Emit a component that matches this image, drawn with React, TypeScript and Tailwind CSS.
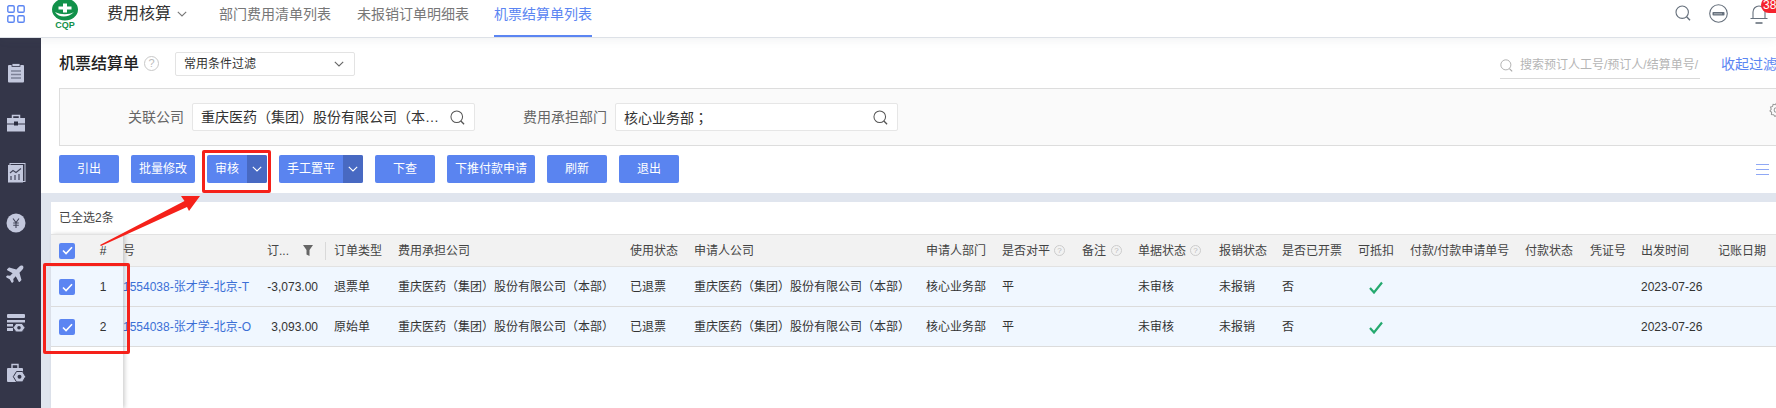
import React from "react";
import { FaPlane } from "react-icons/fa";

const GRID = "grid grid-cols-[136px_67px_64px_232px_64px_232px_76px_80px_56px_81px_63px_76px_52px_115px_65px_51px_77px_66px]";

function Chevron({ className = "", color = "#666" }: { className?: string; color?: string }) {
  return (
    <svg viewBox="0 0 10 6" className={className} fill="none" stroke={color} strokeWidth="1.1">
      <path d="M0.8 0.8 5 5 9.2 0.8" />
    </svg>
  );
}

function SearchIcon({ className = "", color = "#555" }: { className?: string; color?: string }) {
  return (
    <svg viewBox="0 0 16 16" className={className} fill="none" stroke={color} strokeWidth="1.1">
      <circle cx="7.2" cy="7.2" r="6.2" />
      <path d="M11.6 11.8 15 15.2" strokeWidth="1.4" />
    </svg>
  );
}

function Help({ big = false }: { big?: boolean }) {
  return (
    <span
      className={
        big
          ? "inline-flex h-[15px] w-[15px] shrink-0 items-center justify-center rounded-full border border-[#c8c8c8] text-[11px] leading-none text-[#bbbbbb]"
          : "inline-flex h-[11px] w-[11px] shrink-0 items-center justify-center rounded-full border border-[#cccccc] text-[8px] leading-none text-[#bbbbbb]"
      }
    >
      ?
    </span>
  );
}

function Box() {
  return (
    <span className="flex h-4 w-4 items-center justify-center rounded-[2px] bg-[#5b85f2]">
      <svg viewBox="0 0 12 10" className="h-[9px] w-[11px]" fill="none" stroke="#ffffff" strokeWidth="1.8">
        <path d="M1 5 4.4 8.4 11 1.4" />
      </svg>
    </span>
  );
}

function Btn({ children, w }: { children: React.ReactNode; w: string }) {
  return (
    <div className={`flex h-7 items-center justify-center rounded-[2px] bg-[#5a84f0] text-xs text-white ${w}`}>{children}</div>
  );
}

function SplitBtn({ children, w }: { children: React.ReactNode; w: string }) {
  return (
    <div className={`flex h-7 overflow-hidden rounded-[2px] bg-[#5a84f0] text-xs text-white ${w}`}>
      <div className="flex flex-1 items-center justify-center">{children}</div>
      <div className="flex w-5 items-center justify-center bg-[#4869c2]">
        <Chevron className="h-[6px] w-[10px]" color="#ffffff" />
      </div>
    </div>
  );
}

const ICON = "#c3c8dd";
const DARK = "#343649";

const sideIcons = [
  <svg key="a" viewBox="0 0 20 20" className="h-5 w-5">
    <rect x="2" y="2" width="16" height="17.5" rx="1" fill={ICON} />
    <rect x="6" y="0.5" width="8" height="3" fill={ICON} stroke={DARK} strokeWidth="0.8" />
    <path d="M5 8h10M5 11.5h10M5 15h10" stroke="#7c8197" strokeWidth="1.3" />
  </svg>,
  <svg key="b" viewBox="0 0 20 20" className="h-5 w-5">
    <path d="M6.5 5V2.5h7V5" fill="none" stroke={ICON} strokeWidth="1.5" />
    <rect x="1" y="5" width="18" height="5.5" fill={ICON} />
    <rect x="1" y="11.5" width="18" height="7" fill={ICON} />
    <rect x="8" y="8.5" width="4" height="4" fill="#2b2d40" />
  </svg>,
  <svg key="c" viewBox="0 0 20 20" className="h-5 w-5">
    <rect x="4" y="0.5" width="15" height="18" fill="none" stroke={ICON} strokeWidth="1" />
    <rect x="2" y="2" width="15" height="17.5" fill={ICON} />
    <path d="M4 10 7 7.5 10 9.5 15 5.5" fill="none" stroke="#44475b" strokeWidth="1.1" />
    <path d="M5 17v-4M9 17v-5M13 17v-6" stroke="#44475b" strokeWidth="1.2" />
  </svg>,
  <svg key="d" viewBox="0 0 20 20" className="h-5 w-5">
    <circle cx="10" cy="10" r="9.5" fill={ICON} />
    <path d="M7 5.5 10 9.5 13 5.5M10 9.5V15M7.2 10h5.6M7.2 12.3h5.6" fill="none" stroke="#44475b" strokeWidth="1.1" />
  </svg>,
  <FaPlane key="e" className="h-5 w-5 -rotate-45" color={ICON} />,
  <svg key="f" viewBox="0 0 20 20" className="h-5 w-5">
    <rect x="1" y="1" width="18" height="4" rx="1" fill={ICON} />
    <rect x="1" y="7" width="18" height="2.5" fill={ICON} />
    <rect x="1" y="11" width="6" height="2.5" fill={ICON} />
    <rect x="1" y="15" width="6" height="3" fill={ICON} />
    <path d="M10 10.5h6l3 4.2-3 4.2h-6l-3-4.2z" fill={ICON} stroke={DARK} strokeWidth="0.8" />
    <circle cx="13" cy="14.7" r="1.8" fill={DARK} />
  </svg>,
  <svg key="g" viewBox="0 0 20 20" className="h-5 w-5">
    <path d="M6 5V1.5h6V5" fill="none" stroke={ICON} strokeWidth="1.4" />
    <rect x="1" y="5" width="16" height="14" rx="1" fill={ICON} />
    <path d="M10.5 8.5h6l3.2 5.2-3.2 5.2h-6l-3.2-5.2z" fill={ICON} stroke={DARK} strokeWidth="1" />
    <circle cx="13.5" cy="13.7" r="2" fill={DARK} />
  </svg>,
];

const rows = [
  { code: "1554038-张才学-北京-T", amount: "-3,073.00", type: "退票单" },
  { code: "1554038-张才学-北京-O", amount: "3,093.00", type: "原始单" },
];

const COMPANY = "重庆医药（集团）股份有限公司（本部）";

export default function App() {
  return (
    <div className="relative flex h-[408px] w-[1776px] flex-col overflow-hidden bg-[#e0e5ee] font-['Liberation_Sans','Noto_Sans_CJK_SC',sans-serif] text-xs text-[#333333]">
      {/* top bar */}
      <header className="relative z-20 flex h-[38px] shrink-0 items-start border-b border-[#dde1e7] bg-white shadow-[0_3px_8px_rgba(90,100,120,0.07)]">
        <svg viewBox="0 0 18 18" className="ml-[7px] mt-[5px] h-[18px] w-[18px]" fill="none" stroke="#5b85f2" strokeWidth="1.4">
          <rect x="0.8" y="0.8" width="6.4" height="6.4" rx="1.2" />
          <rect x="10.8" y="0.8" width="6.4" height="6.4" rx="1.2" />
          <rect x="0.8" y="10.8" width="6.4" height="6.4" rx="1.2" />
          <rect x="10.8" y="10.8" width="6.4" height="6.4" rx="1.2" />
        </svg>
        <div className="ml-[27px] flex w-[26px] flex-col items-center">
          <svg viewBox="0 0 26 21" className="h-[21px] w-[26px]">
            <ellipse cx="13" cy="9.5" rx="13" ry="11" fill="#11914a" />
            <path d="M3 12c4 6 13 6 19 0-5 3-13 3-19 0z" fill="#ffffff" />
            <path d="M11 3.5h4v3h4.5v3H15v3h-4v-3H6.500v-3H11z" fill="#ffffff" />
          </svg>
          <span className="text-[9px] font-bold leading-[8px] text-[#11914a]">CQP</span>
        </div>
        <div className="ml-[29px] mt-[4px] whitespace-nowrap text-base leading-5 text-[#333333]">费用核算</div>
        <Chevron className="ml-[6px] mt-[11px] h-[6px] w-[10px]" color="#777777" />
        <div className="ml-[32px] mt-[4px] whitespace-nowrap text-sm leading-5 text-[#777777]">部门费用清单列表</div>
        <div className="ml-[26px] mt-[4px] whitespace-nowrap text-sm leading-5 text-[#777777]">未报销订单明细表</div>
        <div className="ml-[25px] flex h-[37px] flex-col border-b-2 border-[#5b85f2] pt-[4px] text-sm leading-5 whitespace-nowrap text-[#5b85f2]">机票结算单列表</div>
        <div className="ml-auto flex items-start">
          <SearchIcon className="mt-[5px] h-4 w-4" color="#66707c" />
          <svg viewBox="0 0 19 19" className="ml-[18px] mt-[4px] h-[19px] w-[19px]" fill="none">
            <circle cx="9.500" cy="9.500" r="8.800" stroke="#66707c" strokeWidth="1.1" />
            <rect x="3.500" y="8" width="12" height="3.500" rx="0.800" fill="#66707c" />
            <path d="M5.500 9.800h8" stroke="#ffffff" strokeWidth="1" strokeDasharray="1 1" />
          </svg>
          <div className="relative ml-[22px] mr-[8px] h-[37px] w-[18px]">
            <svg viewBox="0 0 18 19" className="absolute left-0 top-[5px] h-[19px] w-[18px]" fill="none" stroke="#66707c" strokeWidth="1.1">
              <path d="M3 13V7a6 6 0 0 1 12 0v6M0.500 13.500h17" />
              <path d="M5.500 18h7" strokeWidth="1.600" />
            </svg>
            <span className="absolute left-[11px] top-[-3px] flex h-[16px] w-[30px] items-center rounded-full bg-[#f5222d] pl-[2px] text-xs leading-none text-white">38</span>
          </div>
        </div>
      </header>

      <div className="flex min-h-0 flex-1">
        {/* sidebar */}
        <aside className="flex w-[41px] shrink-0 flex-col bg-[#343649] pl-[6px] pt-[10px]">
          {sideIcons.map((icon, i) => (
            <div key={i} className="flex h-[50px] items-center">
              {icon}
            </div>
          ))}
        </aside>

        <main className="flex min-w-0 flex-1 flex-col">
          {/* toolbar panel */}
          <section className="h-[155px] shrink-0 overflow-hidden bg-white pl-[18px]">
            <div className="mt-[14px] flex h-[27px] items-start">
              <h1 className="whitespace-nowrap text-base font-medium leading-6 text-[#222222]">机票结算单</h1>
              <div className="ml-[5px] mt-[3px]">
                <Help big />
              </div>
              <div className="ml-[16px] flex h-[24px] w-[180px] items-center justify-between rounded-[2px] border border-[#e3e3e3] pl-2 pr-[10px] text-xs text-[#333333]">
                常用条件过滤
                <Chevron className="h-[6px] w-[10px]" color="#666666" />
              </div>
              <div className="flex-1" />
              <div className="flex h-[27px] w-[200px] items-center overflow-hidden border-b border-[#d9d9d9]">
                <SearchIcon className="h-[13px] w-[13px] shrink-0" color="#a9a9a9" />
                <span className="ml-[7px] whitespace-nowrap text-xs text-[#b5b5b5]">搜索预订人工号/预订人/结算单号/</span>
              </div>
              <div className="ml-[21px] w-[55px] shrink-0 overflow-hidden whitespace-nowrap text-sm leading-6 text-[#5b85f2]">收起过滤</div>
            </div>
            <div className="-mr-[10px] mt-[9px] flex h-[58px] items-center border border-[#dddddd] bg-[#fafafa]">
              <div className="w-[124px] whitespace-nowrap text-right text-sm text-[#666666]">关联公司</div>
              <div className="ml-2 flex h-7 w-[283px] items-center justify-between rounded-[2px] border border-[#e6e6e6] bg-white pl-2 pr-[9px] text-sm text-[#333333]">
                <span className="whitespace-nowrap">重庆医药（集团）股份有限公司（本…</span>
                <SearchIcon className="h-[15px] w-[15px] shrink-0" />
              </div>
              <div className="w-[132px] whitespace-nowrap text-right text-sm text-[#666666]">费用承担部门</div>
              <div className="ml-2 flex h-7 w-[283px] items-center justify-between rounded-[2px] border border-[#e6e6e6] bg-white pl-2 pr-[9px] text-sm text-[#333333]">
                <span className="whitespace-nowrap">
                  核心业务部<span className="font-['Noto_Sans_CJK_TC',sans-serif]">；</span>
                </span>
                <SearchIcon className="h-[15px] w-[15px] shrink-0" />
              </div>
              <svg viewBox="0 0 16 16" className="ml-auto mb-[15px] mr-[1px] h-[15px] w-[15px]" fill="none" stroke="#999999" strokeWidth="1.1">
                <path d="M8 1l1.300 1.900 2.300-.5.6 2.300 2.200.8-.8 2.200 1.400 1.800-1.800 1.500.2 2.300-2.300.3L9.600 15.500 8 14l-1.600 1.500-1.500-1.900-2.300-.3.2-2.300L1 9.500l1.400-1.800-.8-2.200 2.200-.8.6-2.300 2.300.5z" />
                <circle cx="8" cy="8.500" r="2.500" />
              </svg>
            </div>
            <div className="mt-[9px] flex items-center gap-3">
              <Btn w="w-[60px]">引出</Btn>
              <Btn w="w-[64px]">批量修改</Btn>
              <SplitBtn w="w-[60px]">审核</SplitBtn>
              <SplitBtn w="w-[84px]">手工置平</SplitBtn>
              <Btn w="w-[60px]">下查</Btn>
              <Btn w="w-[88px]">下推付款申请</Btn>
              <Btn w="w-[60px]">刷新</Btn>
              <Btn w="w-[60px]">退出</Btn>
              <div className="ml-auto mr-[7px] flex w-[13px] flex-col gap-[4px]">
                <span className="h-px bg-[#8fa8f5]" />
                <span className="h-px bg-[#8fa8f5]" />
                <span className="h-px bg-[#8fa8f5]" />
              </div>
            </div>
          </section>

          {/* table panel */}
          <section className="ml-[10px] mt-[9px] flex min-h-0 flex-1 flex-col bg-white">
            <div className="flex h-[32px] shrink-0 items-center pl-2 text-xs text-[#444444]">已全选2条</div>
            <div className="flex min-h-0 flex-1">
              <div className="relative z-10 w-[72px] shrink-0 bg-white shadow-[2px_0_4px_rgba(0,0,0,0.18)]">
                <div className="flex h-[33px] items-center border-y border-[#e2e2e2] bg-[#f2f2f2]">
                  <div className="flex w-[32px] justify-center"><Box /></div>
                  <div className="w-[40px] text-center">#</div>
                </div>
                {[1, 2].map((n) => (
                  <div key={n} className="flex h-[40px] items-center border-b border-[#dcdcdc] bg-[#f0f7ff] pt-px">
                    <div className="flex w-[32px] justify-center"><Box /></div>
                    <div className="w-[40px] text-center">{n}</div>
                  </div>
                ))}
              </div>
              <div className="min-w-0 flex-1">
                <div className={`${GRID} h-[33px] items-center border-y border-[#e2e2e2] bg-[#f2f2f2] text-[#444444]`}>
                  <div>号</div>
                  <div className="flex items-center pl-2">
                    <span>订...</span>
                    <svg viewBox="0 0 10 11" className="ml-auto mr-[12px] h-[11px] w-[10px]">
                      <path d="M0 0h10L6.500 5v6l-3-1.500V5z" fill="#666666" />
                    </svg>
                    <span className="h-[18px] w-px bg-[#d9d9d9]" />
                  </div>
                  <div className="pl-2">订单类型</div>
                  <div className="pl-2">费用承担公司</div>
                  <div className="pl-2">使用状态</div>
                  <div className="pl-2">申请人公司</div>
                  <div className="pl-2">申请人部门</div>
                  <div className="flex items-center gap-[4px] pl-2">是否对平<Help /></div>
                  <div className="flex items-center gap-[5px] pl-2">备注<Help /></div>
                  <div className="flex items-center gap-[4px] pl-2">单据状态<Help /></div>
                  <div className="pl-2">报销状态</div>
                  <div className="pl-2">是否已开票</div>
                  <div className="pl-2">可抵扣</div>
                  <div className="whitespace-nowrap pl-2">付款/付款申请单号</div>
                  <div className="pl-2">付款状态</div>
                  <div className="pl-2">凭证号</div>
                  <div className="pl-2">出发时间</div>
                  <div className="pl-2">记账日期</div>
                </div>
                {rows.map((r) => (
                  <div key={r.code} className={`${GRID} h-[40px] items-center border-b border-[#dcdcdc] bg-[#f0f7ff] pt-px`}>
                    <div className="whitespace-nowrap text-[#3b6fd6]">{r.code}</div>
                    <div className="pr-2 text-right">{r.amount}</div>
                    <div className="pl-2">{r.type}</div>
                    <div className="whitespace-nowrap pl-2">{COMPANY}</div>
                    <div className="pl-2">已退票</div>
                    <div className="whitespace-nowrap pl-2">{COMPANY}</div>
                    <div className="pl-2">核心业务部</div>
                    <div className="pl-2">平</div>
                    <div />
                    <div className="pl-2">未审核</div>
                    <div className="pl-2">未报销</div>
                    <div className="pl-2">否</div>
                    <div className="flex justify-center">
                      <svg viewBox="0 0 14 13" className="h-[13px] w-[14px]" fill="none" stroke="#25a96f" strokeWidth="2.2">
                        <path d="M1 7 5 11.500 13 1.500" />
                      </svg>
                    </div>
                    <div />
                    <div />
                    <div />
                    <div className="pl-2">2023-07-26</div>
                    <div />
                  </div>
                ))}
              </div>
            </div>
          </section>
        </main>
      </div>

      {/* red annotations */}
      <div className="pointer-events-none absolute left-[202px] top-[150px] z-30 h-[43px] w-[69px] rounded-[2px] border-[3px] border-[#f5211a]" />
      <div className="pointer-events-none absolute left-[43px] top-[263px] z-30 h-[91px] w-[87px] rounded-[2px] border-[3px] border-[#f5211a]" />
      <svg viewBox="0 0 1776 408" className="pointer-events-none absolute left-0 top-0 z-30 h-[408px] w-[1776px]">
        <polygon points="100,245 184.500,201 181,196 200,196 189,211 187,207 101,246" fill="#f5211a" />
      </svg>
    </div>
  );
}
